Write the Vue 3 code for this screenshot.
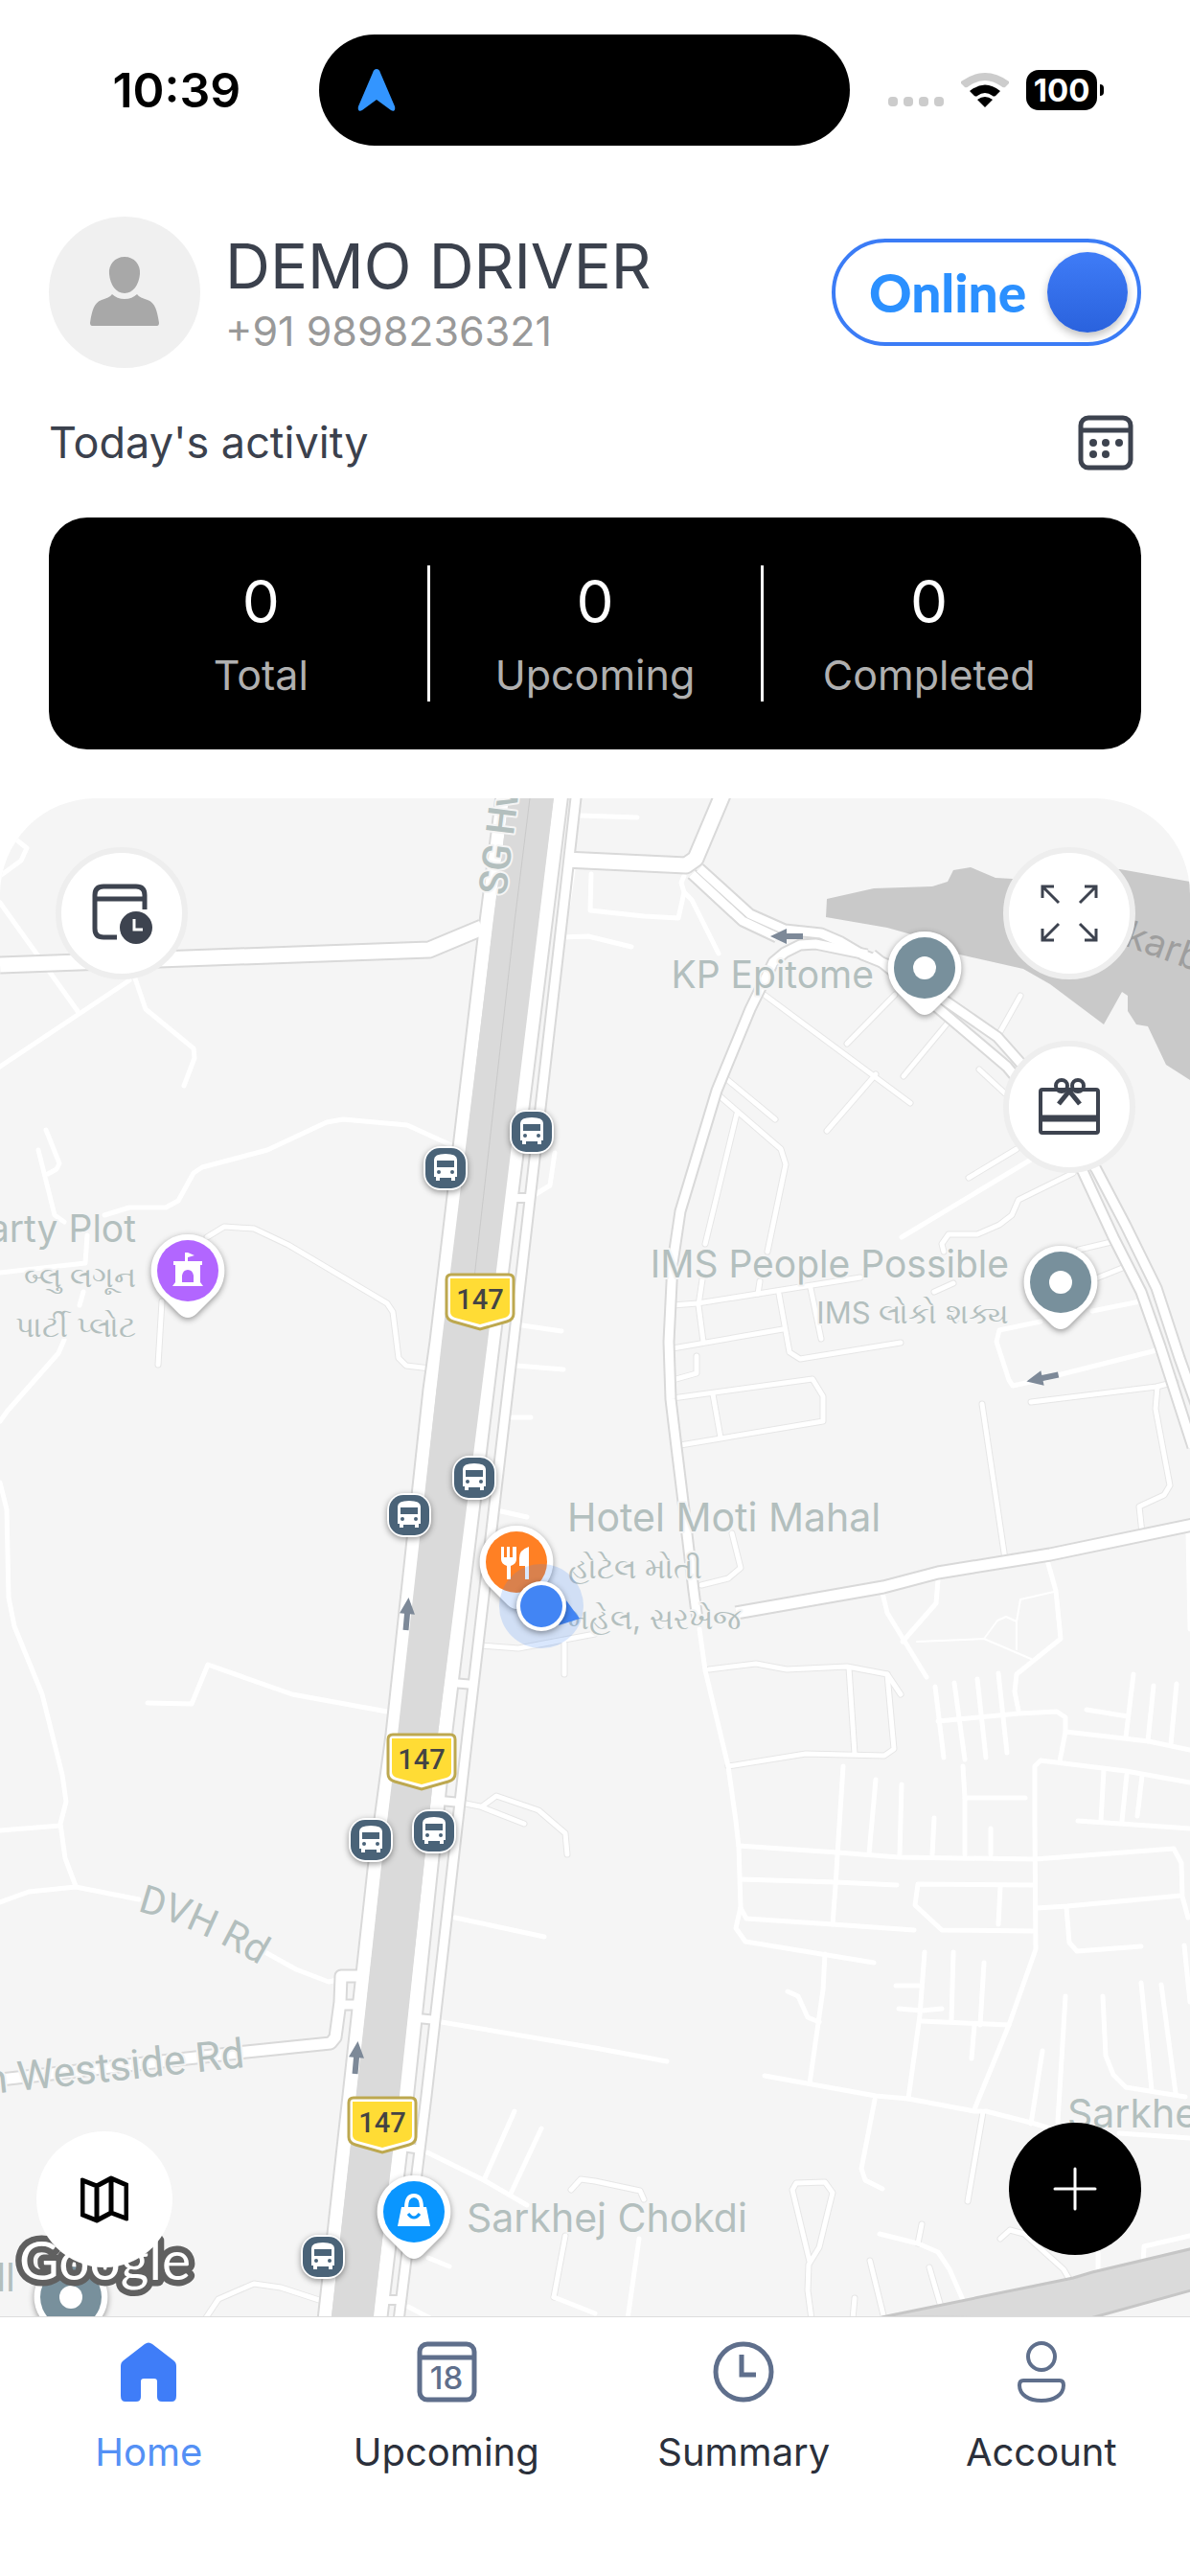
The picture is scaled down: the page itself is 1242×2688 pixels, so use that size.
<template>
  <div class="app">
    <header class="status">
      <time class="clock">10:39</time>
      <div class="island">
        <svg class="nav-arrow" viewBox="0 0 40 44">
          <path d="M20 0c2 0 3 1 4 4l15 35c1 4-1 6-4 4L20 32 5 43c-3 2-5 0-4-4L16 4c1-3 2-4 4-4z" fill="#3395ff" />
        </svg>
      </div>
      <div class="signals">
        <div class="dots"><i v-for="n in 4" :key="n"></i></div>
        <svg class="wifi" viewBox="0 0 50 36">
          <path d="M0 9Q25-9 50 9L50 11 46 15Q44 16 42 14 25 2 8 14 6 16 4 15L0 11z" fill="#ccc" />
          <path d="M9 19Q25 6 41 19L36 24Q34 25 33 24 25 18 17 24 16 25 14 24z" />
          <path d="M17 28Q25 22 33 28L25 36z" />
        </svg>
        <div class="battery"><span>100</span></div>
      </div>
    </header>

    <section class="profile">
      <div class="avatar">
        <svg viewBox="0 0 74 74" fill="#a8a8a8">
          <path d="M37 0c10 0 17 8 16 18-1 11-7 20-16 20s-15-9-16-20C20 8 27 0 37 0z" />
          <path d="M24 39c3 3 8 5 13 5s10-2 13-5c2 3 6 4 11 6 8 3 10 11 12 24 0 2-1 3-2 3H3c-1 0-2-1-2-3 2-13 4-21 12-24 5-2 9-3 11-6z" />
        </svg>
      </div>
      <div class="who">
        <h1>DEMO DRIVER</h1>
        <p>+91 9898236321</p>
      </div>
      <label class="toggle">
        <input v-model="online" type="checkbox" />
        <span>{{ online ? 'Online' : 'Offline' }}</span>
        <i class="knob"></i>
      </label>
    </section>

    <section class="activity">
      <h2>Today's activity</h2>
      <button class="plain" aria-label="Pick date">
        <svg class="calendar" viewBox="0 0 58 58" fill="none" stroke="#3d434f" stroke-width="5">
          <rect x="3" y="3" width="52" height="52" rx="8" />
          <path d="M3 16h52" />
          <g fill="#3d434f" stroke="none">
            <circle cx="16" cy="29" r="4" /><circle cx="29" cy="29" r="4" /><circle cx="43" cy="29" r="4" />
            <circle cx="16" cy="41" r="4" /><circle cx="29" cy="41" r="4" />
          </g>
        </svg>
      </button>
    </section>

    <section class="stats">
      <div v-for="s in stats" :key="s.label" class="stat">
        <strong>{{ s.value }}</strong>
        <span>{{ s.label }}</span>
      </div>
    </section>

    <main class="map">
      <svg class="canvas" viewBox="0 833 1242 1584" preserveAspectRatio="xMidYMid slice">
        <path class="water" d="M863 938L912 927 973 925 989 920 995 908 1013 905 1039 916 1057 917 1169 907 1242 920V1127L1217 1111 1198 1071 1186 1069 1177 1055V1039L1171 1035 1152 1069 1096 1027 1068 1011 997 995 958 977 926 968 862 957z" />

        <polyline v-for="(p, i) in streets" :key="'sc' + i" class="road street-case" :points="p" />
        <polyline v-for="(p, i) in lanes" :key="'l' + i" class="road lane" :points="p" />
        <polyline v-for="(p, i) in streets" :key="'s' + i" class="road street" :points="p" />
        <polyline v-for="(p, i) in paths" :key="'p' + i" class="road path" :points="p" />
        <path class="trunk edge" d="M920 2418L1120 2377 1140 2371 1250 2345V2388L1138 2419z" />
        <polyline v-for="(r, i) in roads" :key="'rc' + i" class="road road-case" :points="r.p" :stroke-width="r.w + 4" />
        <polyline v-for="(r, i) in roads" :key="'r' + i" class="road main" :points="r.p" :stroke-width="r.w" />
        <path class="trunk" d="M531 833L515 962 461 1400 415 1810 398 1951 372 2187 346 2417H390L416 2187 442 1951 457 1810 509 1400 578 833z" />
        <path d="M553 833L537 962 492 1360" fill="none" stroke="#c9c9c9" stroke-width="1" />

        <g class="arrow">
          <path v-for="(a, i) in arrows" :key="i" d="M0-17L8 0H3V17H-3V0H-8z" :transform="`translate(${a.x} ${a.y}) rotate(${a.r})`" />
        </g>

        <g class="label">
          <text x="528" y="935" transform="rotate(-83 528 935)" class="street-name bold">SG Hwy</text>
          <text x="0" y="0" transform="translate(1172 986) rotate(20)" class="lake">karba</text>
          <text x="912" y="1031" text-anchor="end">KP Epitome</text>
          <text x="1053" y="1333" text-anchor="end">IMS People Possible</text>
          <text x="1053" y="1381" text-anchor="end" class="local">IMS લોકો શક્ય</text>
          <text x="142" y="1296" text-anchor="end">Party Plot</text>
          <text x="142" y="1343" text-anchor="end" class="local">બ્લુ લગૂન</text>
          <text x="142" y="1395" text-anchor="end" class="local">પાર્ટી પ્લોટ</text>
          <text x="592" y="1598" class="large">Hotel Moti Mahal</text>
          <text x="593" y="1647" class="local">હોટેલ મોતી</text>
          <text x="593" y="1700" class="local">મહેલ, સરખેજ</text>
          <path id="dvh" d="M143 1994Q206 2010 290 2062" fill="none" stroke="none" />
          <text class="street-name"><textPath href="#dvh">DVH Rd</textPath></text>
          <text x="256" y="2157" text-anchor="end" transform="rotate(-6 256 2157)" class="street-name wide">n Westside Rd</text>
          <text x="487" y="2329" class="large">Sarkhej Chokdi</text>
          <text x="1114" y="2220" class="large">Sarkhej</text>
          <text x="16" y="2391" text-anchor="end" class="large">ll</text>
        </g>

        <g v-for="(s, i) in shields" :key="'h' + i" :transform="`translate(${s.x} ${s.y})`">
          <path d="M-28-27H30Q35-27 35-22V14Q35 20 28 22L0 30-28 22Q-35 20-35 14V-22Q-35-27-30-27z" fill="#fff" stroke="#bda84f" stroke-width="3" />
          <path d="M-31-23H31V12Q31 16 26 18L0 25-26 18Q-31 16-31 12z" fill="#ffdc35" />
          <text class="shield" text-anchor="middle" y="9">147</text>
        </g>

        <g v-for="(b, i) in buses" :key="'b' + i" :transform="`translate(${b.x} ${b.y})`">
          <rect class="shadow" x="-23" y="-23" width="46" height="46" rx="18" fill="#fff" />
          <rect x="-21" y="-21" width="42" height="42" rx="15" fill="#4a6378" />
          <path d="M-12-9Q-12-15 0-15T12-9V9H10V13H6V10H-6V13H-10V9H-12z" fill="#fff" />
          <path d="M-9-8H9V-1H-9z" fill="#4a6378" />
          <circle cx="-7" cy="4" r="2" fill="#4a6378" /><circle cx="7" cy="4" r="2" fill="#4a6378" />
        </g>

        <g v-for="(p, i) in pins" :key="'n' + i" :transform="`translate(${p.x} ${p.y})`">
          <path class="shadow" d="M0-38A38 38 0 0 1 29 25L9 45Q0 53-9 45L-29 25A38 38 0 0 1 0-38z" fill="#fff" />
          <circle r="32" :fill="p.color" />
          <circle v-if="p.kind === 'dot'" r="12" fill="#fff" />
          <path v-if="p.kind === 'castle'" fill="#fff" fill-rule="evenodd" d="M-3-19H0L7-16 0-14V-10H15V-6H13V12L16 16H-16L-13 12V-6H-15V-10H-3zM-6 12H6V5Q5-1 0-1T-6 5z" />
          <path v-if="p.kind === 'food'" fill="#fff" d="M-16-16H-13V-5H-10V-16H-7V-5H-4V-16H0V-3Q0 2-6 4V18H-10V4Q-16 2-16-3zM13-16V18H9V4H3V-4Q3-13 13-16z" />
          <g v-if="p.kind === 'shop'">
            <path d="M-13-5H13L17 15H-17z" fill="#fff" />
            <path d="M-8-4Q-8-17 0-17T8-4" fill="none" stroke="#fff" stroke-width="4" />
            <path d="M-6 2Q0 10 6 2" fill="none" :stroke="p.color" stroke-width="3" />
          </g>
        </g>

        <g transform="translate(565 1676)">
          <circle r="44" fill="#4285f4" fill-opacity=".2" />
          <path d="M26-6L40 13 18 20z" fill="#4285f4" />
          <circle class="shadow" r="26" fill="#fff" />
          <circle r="22" fill="#4285f4" />
        </g>
        <text class="google" x="20" y="2379">Google</text>
      </svg>

      <button class="fab ringed schedule" aria-label="Schedule">
        <svg viewBox="0 0 64 64" fill="none" stroke="#3d434f" stroke-width="5">
          <path d="M27 57H13Q4 57 4 48V13Q4 4 13 4H47Q56 4 56 13V28M4 17H56" />
          <circle cx="47" cy="47" r="17" fill="#3d434f" stroke="none" />
          <path d="M45 38V49H54" stroke="#fff" stroke-width="3" />
        </svg>
      </button>
      <div class="tools">
        <button class="fab ringed" aria-label="Full screen">
          <svg viewBox="0 0 64 64" fill="none" stroke="#3d434f" stroke-width="3">
            <path d="M21 21L5 5M4 16V4H16M43 21L59 5M48 4H60V16M21 43L5 59M4 48V60H16M43 43L59 59M60 48V60H48" />
          </svg>
        </button>
        <button class="fab ringed" aria-label="Rewards">
          <svg viewBox="0 0 64 64" fill="none" stroke="#3d434f" stroke-width="4">
            <rect x="2" y="14" width="60" height="45" rx="2" />
            <path d="M2 44H62" stroke-width="7" />
            <circle cx="24" cy="10" r="6" /><circle cx="41" cy="10" r="6" />
            <path d="M28 13L32 15 37 13M34 13L21 29M30 13L43 29" stroke-width="5" />
          </svg>
        </button>
      </div>
      <button class="fab layers" aria-label="Map type">
        <svg viewBox="0 0 50 50" fill="none" stroke="#000" stroke-width="5" stroke-linejoin="round">
          <path d="M2 5L17 11 32 3 48 10V45L32 39 17 47 2 41zM17 11V47M32 3V39" />
        </svg>
      </button>
      <button class="fab add" aria-label="Add">
        <svg viewBox="0 0 46 46" stroke="#fff" stroke-width="3" stroke-linecap="round"><path d="M23 2V44M2 23H44" /></svg>
      </button>
    </main>

    <nav class="tabs">
      <a href="#home" class="active">
        <svg viewBox="0 0 64 64" fill="#3f7df8">
          <path d="M28 3Q32 0 36 3L58 20Q61 22 61 26V57Q61 63 56 63H46Q41 63 41 58V42Q41 39 38 39H27Q24 39 24 42V58Q24 63 19 63H8Q3 63 3 57V26Q3 22 6 20z" />
        </svg>
        Home
      </a>
      <a href="#upcoming">
        <svg viewBox="0 0 64 64" fill="none" stroke="#5f6f8c" stroke-width="5">
          <rect x="4" y="3" width="57" height="58" rx="8" />
          <path d="M4 17H61" />
          <text class="day" x="32" y="50" text-anchor="middle">18</text>
        </svg>
        Upcoming
      </a>
      <a href="#summary">
        <svg viewBox="0 0 64 64" fill="none" stroke="#5f6f8c" stroke-width="5">
          <circle cx="32" cy="32" r="29" />
          <path d="M30 14V35H45" />
        </svg>
        Summary
      </a>
      <a href="#account">
        <svg viewBox="0 0 64 64" fill="none" stroke="#5f6f8c" stroke-width="4">
          <circle cx="32" cy="16" r="14" />
          <path d="M13 41H51Q55 41 55 46C55 56 45 62 32 62S9 56 9 46Q9 41 13 41z" />
        </svg>
        Account
      </a>
    </nav>
  </div>
</template>

<script setup>
import { ref } from 'vue'

const online = ref(true)

const stats = [
  { label: 'Total', value: 0 },
  { label: 'Upcoming', value: 0 },
  { label: 'Completed', value: 0 }
]

const pins = [
  { x: 965, y: 1010, color: '#78909c', kind: 'dot' },
  { x: 1107, y: 1338, color: '#78909c', kind: 'dot' },
  { x: 74, y: 2397, color: '#78909c', kind: 'dot' },
  { x: 196, y: 1326, color: '#b266ff', kind: 'castle' },
  { x: 539, y: 1630, color: '#ff8024', kind: 'food' },
  { x: 432, y: 2308, color: '#0a96ff', kind: 'shop' }
]

const buses = [
  { x: 465, y: 1219 }, { x: 555, y: 1181 }, { x: 495, y: 1542 }, { x: 427, y: 1581 },
  { x: 387, y: 1920 }, { x: 453, y: 1911 }, { x: 337, y: 2355 }
]

const shields = [{ x: 501, y: 1357 }, { x: 440, y: 1837 }, { x: 399, y: 2216 }]

const arrows = [
  { x: 425, y: 1684, r: 5 }, { x: 372, y: 2147, r: 5 },
  { x: 821, y: 977, r: -90 }, { x: 1088, y: 1438, r: -102 }
]

// w = road width, p = points
const roads = [
  { w: 15, p: '0,1007 448,991 503,968' },
  { w: 15, p: '590,897 716,903 726,896 756,825' },
  { w: 9, p: '722,912 775,961 811,978' },
  { w: 9, p: '730,906 783,954 819,970 857,974 878,983 900,996 930,1008 989,1046 1041,1082 1065,1109 1105,1160 1144,1220 1175,1279 1207,1344 1231,1417 1250,1470' },
  { w: 9, p: '910,996 940,1020 979,1052 1051,1113 1090,1160 1130,1222 1162,1291 1191,1348 1211,1405 1245,1510' },
  { w: 9, p: '905,996 890,993 851,985 835,986 819,994 807,1004 783,1053 748,1138 710,1264 702,1318 698,1400 700,1460 706,1510 713,1567 724,1660 728,1690' },
  { w: 11, p: '768,1683 922,1656 979,1641 1096,1622 1250,1590' },
  { w: 11, p: '0,2170 257,2141 345,2132 350,2126 355,2089 356,2062 376,2062' },
  { w: 9, p: '356,2092 374,2092' },
  { w: 9, p: '603,815 590,930 536,1400 488,1810 472,1951 445,2187 415,2430' },
  { w: 8, p: '532,1250 554,1250' },
  { w: 8, p: '472,1756 495,1758' },
  { w: 8, p: '460,1879 481,1881' },
  { w: 8, p: '436,2106 456,2108' },
  { w: 8, p: '420,2240 440,2243' },
  { w: 8, p: '400,2400 420,2400' },
  { w: 13, p: '527,815 508,962 456,1400 449,1450 410,1810 391,1951 365,2187 338,2430' },
  { w: 14, p: '587,815 514,1400 464,1810 449,1951 424,2187 395,2430' }
]

const streets = [
  '216,1291 234,1280 265,1282 301,1299 404,1360 410,1369 416,1417 424,1425 449,1428',
  '169,1358 165,1424',
  '501,1717 541,1720 621,1705', '589,1715 589,1747',
  '481,1881 501,1885 547,1903', '503,1885 518,1874 562,1889 590,1913 592,1935',
  '214,2420 228,2399 265,2383 293,2387 333,2400',
  '578,2397 590,2333', '596,2285 606,2274 621,2276 668,2286 672,2295',
  '795,1036 950,1151', '934,1038 884,1089', '914,1121 863,1180', '991,1065 943,1123',
  '1065,1039 1042,1080', '1022,1116 1049,1141', '756,1124 809,1168',
  '748,1141 815,1199 820,1215 801,1306', '793,1337 791,1350', '769,1162 736,1298',
  '733,1335 729,1362 734,1400', '1011,1229 1061,1199',
  '1120,1224 1063,1252 1056,1268 1043,1278 1020,1288 990,1288 983,1298 985,1306',
  '995,1339 975,1348', '1126,1304 1164,1295', '1144,1334 1179,1320',
  '702,1362 728,1360 898,1333', '702,1407 817,1387', '813,1350 824,1411 835,1418 940,1401',
  '846,1344 857,1397', '702,1440 727,1433 727,1415',
  '702,1459 848,1439 859,1457 859,1483 752,1501 710,1508', '744,1455 752,1500',
  '1076,1463 1207,1447 1227,1442', '1208,1447 1206,1470 1221,1550 1215,1560 1189,1572 1192,1600',
  '1025,1465 1049,1627', '764,1600 773,1636 760,1647 732,1654',
  '740,1742 789,1736 821,1742 884,1739 926,1747 940,1768',
  '926,1747 933,1825 923,1832 841,1830 760,1843', '886,1740 892,1830',
  '1026,2204 1010,2297',
  '845,2360 827,2285 831,2278 861,2277 869,2288 863,2312 855,2345 844,2363 843,2390 847,2420',
  '962,2321 958,2341', '908,2359 923,2420', '970,2366 982,2407', '892,2398 890,2420',
  '1044,2336 1054,2327 1069,2331 1110,2368 1117,2380'
]

const lanes = [
  '18,877 28,885 22,898 0,914', '0,942 81,1055', '0,1113 135,1023',
  '141,1021 152,1053 202,1094 203,1104 192,1133', '48,1179 62,1214 59,1220 50,1225',
  '40,1200 57,1268 67,1275',
  '109,1268 135,1260 173,1260 186,1253 202,1224 211,1218 279,1200 341,1171 358,1168 425,1174 471,1195',
  '91,1289 89,1318 0,1328', '87,1348 83,1362', '67,1398 61,1412 8,1472 0,1483',
  '0,1547 7,1575 9,1667 15,1697 44,1768 65,1852 69,1880 63,1903 68,1939 79,1968',
  '0,1910 63,1905', '0,1985 30,1974 79,1969 145,1982', '273,2035 309,2055 343,2068 352,2066',
  '154,1777 200,1778 217,1737 305,1768 404,1786',
  '545,1383 586,1389', '539,1425 588,1429', '535,1479 554,1479', '523,1577 550,1583',
  '606,851 665,853', '598,908 593,944', '617,912 616,950 672,956 708,958 714,931 711,921 714,914',
  '586,978 614,977 659,988', '714,931 722,939 750,995', '579,1203 574,1237 556,1248',
  '475,2001 568,2021', '461,2110 621,2137 696,2151', '446,2246 505,2275 550,2301',
  '537,2203 505,2275', '565,2221 533,2289', '447,2356 469,2365', '426,2407 451,2420',
  '578,2397 621,2414', '667,2336 655,2420', '941,1291 1076,1210',
  '1195,1357 1140,1368', '1086,1379 1043,1388 1040,1400 1053,1440 1057,1446 1080,1441 1211,1408',
  '730,1700 736,1743 760,1843 768,1900 771,1927 773,1990 768,2012 778,2026 912,2048',
  '921,1662 926,1683 967,1750', '979,1648 977,1673 942,1713',
  '1093,1628 1102,1660 1107,1710 1061,1747 1059,1765 1063,1785',
  '976,1760 985,1834', '996,1756 1007,1836', '1020,1752 1029,1834', '1042,1746 1051,1829',
  '979,1796 1063,1788 1103,1786 1112,1792 1112,1807 1106,1838', '1112,1807 1199,1817 1242,1826',
  '1183,1747 1175,1813', '1204,1759 1198,1817', '1228,1757 1222,1820', '1134,1784 1177,1791',
  '1242,1860 1175,1848 1086,1837 1080,1843 1080,1900 1081,2034 1053,2113 1017,2201',
  '1152,1847 1149,1900', '1176,1852 1171,1900', '1192,1853 1187,1895', '1125,1900 1242,1908',
  '1240,1600 1242,1700', '880,1843 875,1920 872,1968 869,2008', '914,1857 907,1935',
  '941,1862 939,1935', '975,1897 973,1935', '1005,1843 1007,1876 1007,1935', '1007,1876 1070,1876',
  '1034,1908 1034,1935',
  '771,1926 874,1933 938,1938 1080,1940 1146,1935 1225,1929 1233,1944 1234,1979 1240,2001',
  '773,1961 872,1964 936,1967', '773,1991 779,2002 869,2008 954,2014',
  '1080,1967 958,1966 955,1988 983,2014 1080,2015', '1044,1969 1042,2008',
  '1082,1991 1114,1989 1233,1978', '1113,1990 1116,2027 1124,2036 1191,2031',
  '861,2039 859,2076 845,2174', '822,2078 833,2083 843,2105 855,2110',
  '798,2166 914,2187 948,2190 1017,2203 1029,2203 1080,2216 1096,2221',
  '965,2037 960,2103 948,2190', '935,2072 960,2072', '938,2096 962,2098 983,2096',
  '995,2037 993,2108', '1027,2048 1023,2113', '1017,2113 1014,2148', '962,2109 1053,2113',
  '913,2191 899,2263 903,2275 921,2284', '1088,2140 1076,2216', '1112,2083 1104,2214',
  '1151,2083 1154,2145 1162,2165 1175,2178 1237,2188', '1191,2069 1202,2181', '1212,2071 1227,2184',
  '1236,2030 1242,2089', '1168,2226 1242,2231', '918,2331 958,2341 979,2350 991,2368 1005,2400',
  '1146,2351 1146,2372', '1193,2362 1194,2344 1242,2333'
]

const paths = [
  '957,1713 1027,1710 1076,1731', '1027,1710 1041,1691 1050,1687 1061,1692',
  '1100,1661 1065,1669 1061,1692 1061,1721'
]
</script>

<style>
body { margin: 0; background: #fff; }
</style>

<style scoped>
.app { min-height: 100vh; display: flex; flex-direction: column; background: #fff; color: #3b414d; font-family: Inter, "Noto Sans", sans-serif; }
button { border: 0; padding: 0; background: none; cursor: pointer; }
h1, h2, p { margin: 0; font-weight: 400; }

.status { display: grid; grid-template-columns: 15fr 25fr 16fr; padding: 36px 0; color: #000; }
.clock { font-size: 50px; line-height: 116px; font-weight: 600; text-align: center; padding-left: 36px; }
.island { height: 116px; border-radius: 58px; background: #000; display: flex; align-items: center; padding-left: 40px; box-sizing: border-box; }
.nav-arrow { width: 40px; height: 44px; }
.signals { display: flex; align-items: center; padding-left: 40px; gap: 18px; }
.dots { display: flex; gap: 6px; padding-top: 24px; }
.dots i { width: 10px; height: 10px; border-radius: 4px; background: #ccc; }
.wifi { width: 50px; height: 36px; }
.battery { position: relative; width: 74px; height: 42px; border-radius: 13px; background: #000; color: #fff; font-size: 33px; line-height: 42px; font-weight: 700; text-align: center; }
.battery::after { content: ""; position: absolute; right: -7px; top: 15px; width: 4px; height: 12px; border-radius: 0 4px 4px 0; background: #000; }

.profile { display: flex; align-items: center; padding: 38px 51px 0; }
.avatar { width: 158px; height: 158px; border-radius: 50%; background: #f0f0f0; display: flex; align-items: center; justify-content: center; }
.avatar svg { width: 74px; height: 74px; }
.who { flex: 1; padding-left: 26px; }
.who h1 { font-size: 65px; line-height: 81px; }
.who p { font-size: 43px; line-height: 55px; color: #999; }
.toggle { width: 323px; height: 112px; box-sizing: border-box; border: 4px solid #3b7cf6; border-radius: 56px; display: flex; align-items: center; justify-content: space-between; padding: 0 10px 0 35px; font: 900 55px/80px Lato, sans-serif; color: #2b90ff; cursor: pointer; position: relative; }
.toggle input { position: absolute; opacity: 0; }
.knob { width: 84px; height: 84px; border-radius: 50%; background: linear-gradient(#3f7cf7, #2a62dd); box-shadow: 0 4px 8px rgba(0,0,0,.25); }

.activity { display: flex; align-items: center; justify-content: space-between; height: 156px; padding: 0 59px 0 51px; }
.activity h2 { font-size: 45px; line-height: 60px; }
.calendar { display: block; width: 58px; height: 58px; }

.stats { display: grid; grid-template-columns: repeat(3, 1fr); margin: 0 51px 51px; padding: 45px 47px; background: #000; border-radius: 40px; }
.stat { position: relative; display: flex; flex-direction: column; align-items: center; }
.stat + .stat::before { content: ""; position: absolute; left: -1px; top: 5px; bottom: 5px; width: 3px; background: #fff; }
.stat strong { font-size: 62px; line-height: 86px; font-weight: 400; color: #fff; }
.stat span { font-size: 43px; line-height: 66px; color: #b0b0b0; }

.map { position: relative; flex: 1; min-height: 900px; border-radius: 100px 100px 0 0; overflow: hidden; background: #f5f5f5; }
.canvas { position: absolute; width: 100%; height: 100%; }
.water { fill: #c9c9c9; }
.trunk { fill: #dadada; }
.edge { stroke: #c6c6c6; stroke-width: 3; }
.road { fill: none; stroke: #fff; stroke-linejoin: round; stroke-linecap: round; }
.lane { stroke-width: 5; }
.street { stroke-width: 5; }
.street-case { stroke: #e6e6e6; stroke-width: 7; }
.path { stroke-width: 2; }
.road-case { stroke: #d9d9d9; stroke-linecap: butt; }
.main { stroke-linecap: butt; }
.arrow { fill: #7d8998; }
.label { font-size: 39px; fill: #b3bfbe; stroke: #f5f5f5; stroke-width: 4px; paint-order: stroke; stroke-linejoin: round; }
.label .large { font-size: 41px; }
.label .local { font-size: 31px; }
.label .street-name { font-family: Roboto, sans-serif; font-size: 41px; }
.label .wide { font-size: 43px; }
.label .bold { font-weight: 500; }
.label .lake { fill: #9e9e9e; stroke: none; }
.shield { font: 500 29px Roboto, sans-serif; fill: #444; }
.shadow { filter: drop-shadow(0 2px 3px rgba(0,0,0,.4)); }
.google { font: 400 57px Lato, sans-serif; fill: #fff; stroke: #606060; stroke-width: 13px; stroke-linejoin: round; paint-order: stroke; }

.fab { display: flex; align-items: center; justify-content: center; box-sizing: border-box; width: 138px; height: 138px; border-radius: 50%; background: #fff; }
.ringed { border: 6px solid #eee; }
.fab svg { width: 64px; height: 64px; }
.schedule { position: absolute; left: 58px; top: 51px; }
.tools { position: absolute; right: 57px; top: 51px; display: grid; gap: 64px; }
.layers { position: absolute; left: 38px; bottom: 51px; width: 142px; height: 142px; }
.fab.layers svg { width: 50px; height: 50px; }
.add { position: absolute; right: 51px; bottom: 64px; background: #000; }
.fab.add svg { width: 46px; height: 46px; }

.tabs { display: grid; grid-template-columns: repeat(4, 1fr); border-top: 1px solid #ddd; padding: 25px 0 104px; background: #fff; }
.tabs a { display: flex; flex-direction: column; align-items: center; gap: 27px; font-size: 40px; line-height: 50px; color: #2b303b; text-decoration: none; }
.tabs .active { color: #5490f5; }
.tabs svg { width: 64px; height: 64px; }
.day { font-size: 33px; font-weight: 500; fill: #5f6f8c; stroke: none; }
</style>
